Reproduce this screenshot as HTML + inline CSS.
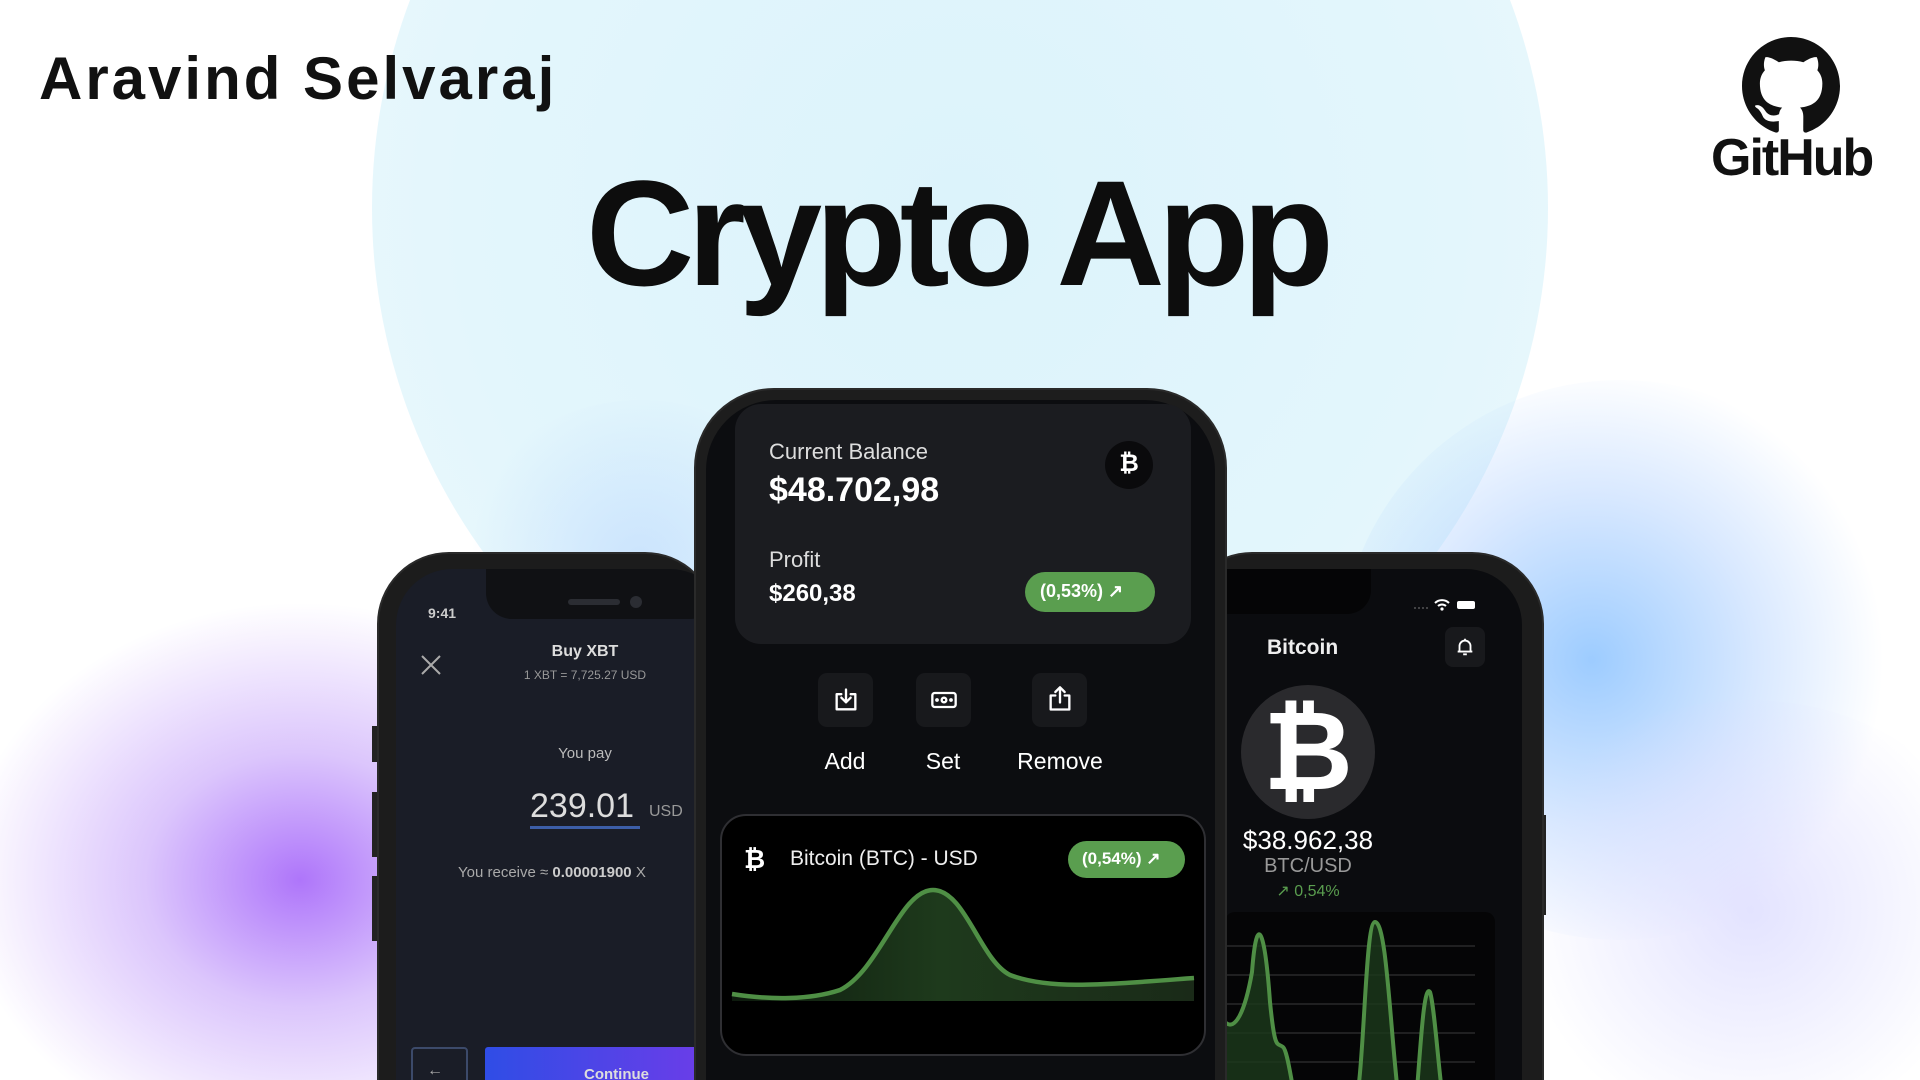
<!DOCTYPE html>
<html><head><meta charset="utf-8"><style>
*{margin:0;padding:0;box-sizing:border-box}
html,body{width:1920px;height:1080px;overflow:hidden;background:#fff;font-family:"Liberation Sans",sans-serif}
#w{position:relative;width:1920px;height:1080px;overflow:hidden}
.abs{position:absolute}
.glow{position:absolute;border-radius:50%}
.phone{position:absolute;background:#1c1c1c;border:2px solid #2a2a2a}
.t{position:absolute;white-space:nowrap}
</style></head><body><div id="w">
<div class="glow" style="left:372px;top:-380px;width:1176px;height:1176px;background:radial-gradient(circle,#dcf3fb 0%,#e3f6fc 60%,#eef9fd 100%)"></div>
<div class="glow" style="left:-40px;top:600px;width:680px;height:560px;background:radial-gradient(ellipse at 50% 50%,rgba(170,110,250,.95) 0%,rgba(190,150,250,.55) 32%,rgba(215,200,255,0) 70%)"></div>
<div class="glow" style="left:1340px;top:380px;width:560px;height:560px;background:radial-gradient(circle at 45% 50%,rgba(140,195,255,.85) 0%,rgba(170,205,255,.45) 40%,rgba(220,230,255,0) 70%)"></div>
<div class="glow" style="left:1500px;top:700px;width:500px;height:420px;background:radial-gradient(circle,rgba(215,215,255,.7) 0%,rgba(230,230,255,0) 70%)"></div>
<div class="glow" style="left:460px;top:400px;width:360px;height:320px;background:radial-gradient(circle,rgba(180,210,255,.5) 0%,rgba(200,225,255,0) 70%)"></div>

<div class="t" style="left:39px;top:44px;font-size:60px;font-weight:bold;color:#111;letter-spacing:3px">Aravind Selvaraj</div>
<div class="t" style="left:586px;top:158px;font-size:150px;font-weight:bold;color:#0d0d0d;letter-spacing:-7px;line-height:1">Crypto App</div>

<svg class="abs" style="left:1742px;top:37px" width="98" height="98" viewBox="0 0 16 16"><path fill="#111" d="M8 0C3.58 0 0 3.58 0 8c0 3.540 2.29 6.53 5.47 7.59.4.07.55-.17.55-.38 0-.19-.01-.82-.01-1.49-2.01.37-2.53-.49-2.690-.94-.09-.23-.48-.94-.82-1.13-.28-.15-.68-.52-.01-.53.63-.01 1.08.58 1.23.82.72 1.21 1.87.87 2.330.66.07-.52.28-.87.51-1.07-1.78-.2-3.64-.89-3.64-3.95 0-.87.31-1.59.82-2.15-.08-.2-.36-1.02.08-2.12 0 0 .67-.21 2.2.82.64-.18 1.32-.27 2-.27.68 0 1.36.09 2 .27 1.53-1.04 2.2-.82 2.2-.82.44 1.1.16 1.92.08 2.12.51.56.82 1.27.82 2.15 0 3.07-1.87 3.75-3.65 3.95.29.25.54.73.54 1.48 0 1.07-.01 1.93-.01 2.2 0 .21.15.46.55.38A8.013 8.013 0 0016 8c0-4.42-3.58-8-8-8z"/></svg>
<div class="t" style="left:1711px;top:128px;font-size:52px;font-weight:bold;color:#111;letter-spacing:-2px">GitHub</div>

<div class="abs" style="left:372px;top:726px;width:6px;height:36px;background:#222"></div>
<div class="abs" style="left:372px;top:792px;width:6px;height:65px;background:#222"></div>
<div class="abs" style="left:372px;top:876px;width:6px;height:65px;background:#222"></div>
<div class="phone" style="left:377px;top:552px;width:340px;height:700px;border-radius:72px">
  <div class="abs" style="left:17px;top:15px;width:330px;height:700px;border-radius:56px;background:#1a1d27;overflow:hidden">
    <div class="abs" style="left:90px;top:-2px;width:230px;height:52px;background:#101114;border-radius:0 0 26px 26px"></div>
    <div class="abs" style="left:172px;top:30px;width:52px;height:6px;background:#2b2d33;border-radius:3px"></div>
    <div class="abs" style="left:234px;top:27px;width:12px;height:12px;background:#2b2d33;border-radius:50%"></div>
  </div>
</div>
<div class="t" style="left:428px;top:605px;font-size:14px;color:#ccc;font-weight:bold">9:41</div>
<svg class="abs" style="left:420px;top:654px" width="22" height="22"><path d="M2 2L20 20M20 2L2 20" stroke="#aaa" stroke-width="2"/></svg>
<div class="t" style="left:520px;top:643px;width:130px;text-align:center;font-size:16px;font-weight:bold;color:#ddd">Buy XBT</div>
<div class="t" style="left:500px;top:668px;width:170px;text-align:center;font-size:12px;color:#999">1 XBT = 7,725.27 USD</div>
<div class="t" style="left:540px;top:745px;width:90px;text-align:center;font-size:15px;color:#bbb">You pay</div>
<div class="t" style="left:530px;top:787px;font-size:34px;color:#ddd">239.01</div>
<div class="t" style="left:649px;top:803px;font-size:16px;color:#999">USD</div>
<div class="abs" style="left:530px;top:826px;width:110px;height:3px;background:#3c5ea8"></div>
<div class="t" style="left:458px;top:864px;font-size:15px;color:#aaa">You receive ≈ <b style="color:#ccc">0.00001900</b> X</div>
<div class="abs" style="left:411px;top:1047px;width:57px;height:40px;border:2px solid #3c4a6a;border-radius:4px"></div>
<div class="t" style="left:427px;top:1062px;font-size:16px;color:#aaa">←</div>
<div class="abs" style="left:485px;top:1047px;width:215px;height:40px;background:linear-gradient(90deg,#2f4de6,#6a3de8);border-radius:3px"></div>
<div class="t" style="left:584px;top:1066px;font-size:15px;color:#ddd;font-weight:bold">Continue</div>

<div class="abs" style="left:1540px;top:815px;width:6px;height:100px;background:#222"></div>
<div class="phone" style="left:1180px;top:552px;width:364px;height:700px;border-radius:72px">
  <div class="abs" style="left:20px;top:15px;width:320px;height:700px;border-radius:0 56px 0 0;background:#0b0c0f;overflow:hidden">
    <div class="abs" style="left:0px;top:-2px;width:169px;height:47px;background:#050506;border-radius:0 0 24px 24px"></div>
  </div>
</div>
<svg class="abs" style="left:1412px;top:596px" width="76" height="16"><g fill="#555"><circle cx="3" cy="12" r="1"/><circle cx="7" cy="12" r="1"/><circle cx="11" cy="12" r="1"/><circle cx="15" cy="12" r="1"/></g><path d="M23 7a10 10 0 0 1 14 0M26 10a6 6 0 0 1 8 0" stroke="#fff" stroke-width="2" fill="none"/><circle cx="30" cy="13" r="1.6" fill="#fff"/><rect x="45" y="5" width="18" height="8" rx="2" fill="#fff"/></svg>
<div class="t" style="left:1267px;top:636px;font-size:21px;font-weight:bold;color:#eee">Bitcoin</div>
<div class="abs" style="left:1445px;top:627px;width:40px;height:40px;background:#18191c;border-radius:8px"></div>
<svg class="abs" style="left:1454px;top:636px" width="22" height="22" viewBox="0 0 24 24"><path d="M6 17V11a6 6 0 0 1 12 0v6H6zM4 17h16M10 20h4M12 3v2" stroke="#fff" stroke-width="2" fill="none" stroke-linejoin="round"/></svg>
<div class="abs" style="left:1241px;top:685px;width:134px;height:134px;border-radius:50%;background:#2a2a2d"></div>
<div class="t" style="left:1241px;top:690px;width:134px;text-align:center;font-size:110px;font-weight:bold;color:#fff;line-height:124px">₿</div>
<div class="t" style="left:1228px;top:825px;width:160px;text-align:center;font-size:26px;color:#fff">$38.962,38</div>
<div class="t" style="left:1228px;top:855px;width:160px;text-align:center;font-size:20px;color:#999">BTC/USD</div>
<div class="t" style="left:1228px;top:881px;width:160px;text-align:center;font-size:16px;color:#5a9e4f">↗ 0,54%</div>
<div class="abs" style="left:1225px;top:912px;width:270px;height:168px;background:#050506;border-radius:10px 10px 0 0"></div>
<svg class="abs" style="left:1225px;top:912px" width="270" height="168"><g stroke="#2a2a2a" stroke-width="1.5"><path d="M0 34H250M0 63H250M0 92H250M0 121H250M0 150H250"/></g><path d="M0 110C10 120 20 100 27 60C32 -5 40 20 45 90C50 140 52 130 58 135C64 140 68 190 75 200L130 200C140 150 140 10 150 10C162 10 165 120 175 200L190 200C195 150 198 70 205 80C210 95 215 180 220 200L0 200Z" fill="#1b3a1b" opacity=".8"/><path d="M0 110C10 120 20 100 27 60C32 -5 40 20 45 90C50 140 52 130 58 135C64 140 68 190 75 200M130 200C140 150 140 10 150 10C162 10 165 120 175 200M190 200C195 150 198 70 205 80C210 95 215 180 220 200" stroke="#4f8f45" stroke-width="4" fill="none"/></svg>

<div class="phone" style="left:694px;top:388px;width:533px;height:800px;border-radius:80px;background:#1d1d1d">
  <div class="abs" style="left:10px;top:10px;width:509px;height:800px;border-radius:70px;background:#0c0d10"></div>
</div>
<div class="abs" style="left:735px;top:404px;width:456px;height:240px;background:#1b1c20;border-radius:26px"></div>
<div class="t" style="left:769px;top:439px;font-size:22px;color:#ddd">Current Balance</div>
<div class="t" style="left:769px;top:471px;font-size:34px;font-weight:bold;color:#fff">$48.702,98</div>
<div class="abs" style="left:1105px;top:441px;width:48px;height:48px;border-radius:50%;background:#0a0a0c"></div>
<div class="t" style="left:1105px;top:450px;width:48px;text-align:center;font-size:24px;font-weight:bold;color:#fff">₿</div>
<div class="t" style="left:769px;top:547px;font-size:22px;color:#ddd">Profit</div>
<div class="t" style="left:769px;top:580px;font-size:24px;font-weight:bold;color:#fff">$260,38</div>
<div class="abs" style="left:1025px;top:572px;width:130px;height:40px;background:#5a9e4f;border-radius:20px"></div>
<div class="t" style="left:1040px;top:581px;font-size:18px;font-weight:bold;color:#fff">(0,53%) ↗</div>

<div class="abs" style="left:818px;top:673px;width:55px;height:54px;background:#18191c;border-radius:9px"></div>
<div class="abs" style="left:916px;top:673px;width:55px;height:54px;background:#18191c;border-radius:9px"></div>
<div class="abs" style="left:1032px;top:673px;width:55px;height:54px;background:#18191c;border-radius:9px"></div>
<svg class="abs" style="left:832px;top:686px" width="28" height="28" viewBox="0 0 24 24" fill="none" stroke="#fff" stroke-width="2" stroke-linecap="round" stroke-linejoin="round"><path d="M8 7H4v13h16V7h-4M12 3v11M8 10l4 4 4-4"/></svg>
<svg class="abs" style="left:929px;top:686px" width="30" height="28" viewBox="0 0 24 24" fill="none" stroke="#fff" stroke-width="2"><rect x="2" y="6" width="20" height="12" rx="2"/><circle cx="12" cy="12" r="2"/><circle cx="6" cy="12" r=".6" fill="#fff"/><circle cx="18" cy="12" r=".6" fill="#fff"/></svg>
<svg class="abs" style="left:1046px;top:684px" width="28" height="30" viewBox="0 0 24 24" fill="none" stroke="#fff" stroke-width="2" stroke-linecap="round" stroke-linejoin="round"><path d="M8 9H4v12h16V9h-4M12 15V2M8 6l4-4 4 4"/></svg>
<div class="t" style="left:805px;top:748px;width:80px;text-align:center;font-size:23px;color:#fff">Add</div>
<div class="t" style="left:903px;top:748px;width:80px;text-align:center;font-size:23px;color:#fff">Set</div>
<div class="t" style="left:1000px;top:748px;width:120px;text-align:center;font-size:23px;color:#fff">Remove</div>

<div class="abs" style="left:720px;top:814px;width:486px;height:242px;background:#000;border:2px solid #2f2f33;border-radius:26px"></div>
<div class="t" style="left:744px;top:844px;font-size:26px;font-weight:bold;color:#fff">₿</div>
<div class="t" style="left:790px;top:847px;font-size:21px;color:#eee">Bitcoin (BTC) - USD</div>
<div class="abs" style="left:1068px;top:841px;width:117px;height:37px;background:#5a9e4f;border-radius:19px"></div>
<div class="t" style="left:1082px;top:849px;font-size:17px;font-weight:bold;color:#fff">(0,54%) ↗</div>
<svg class="abs" style="left:720px;top:860px" width="486" height="160"><defs><linearGradient id="g" x1="0" x2="1"><stop offset="0" stop-color="#0d1a0d"/><stop offset=".45" stop-color="#1e3a1c"/><stop offset="1" stop-color="#1a2a18"/></linearGradient></defs><path d="M12 134C50 140 90 140 120 130C160 110 180 30 213 30C245 30 260 100 290 115C330 130 380 125 474 118V141H12Z" fill="url(#g)"/><path d="M12 134C50 140 90 140 120 130C160 110 180 30 213 30C245 30 260 100 290 115C330 130 380 125 474 118" stroke="#4f8f45" stroke-width="4.5" fill="none"/></svg>
</div></body></html>
